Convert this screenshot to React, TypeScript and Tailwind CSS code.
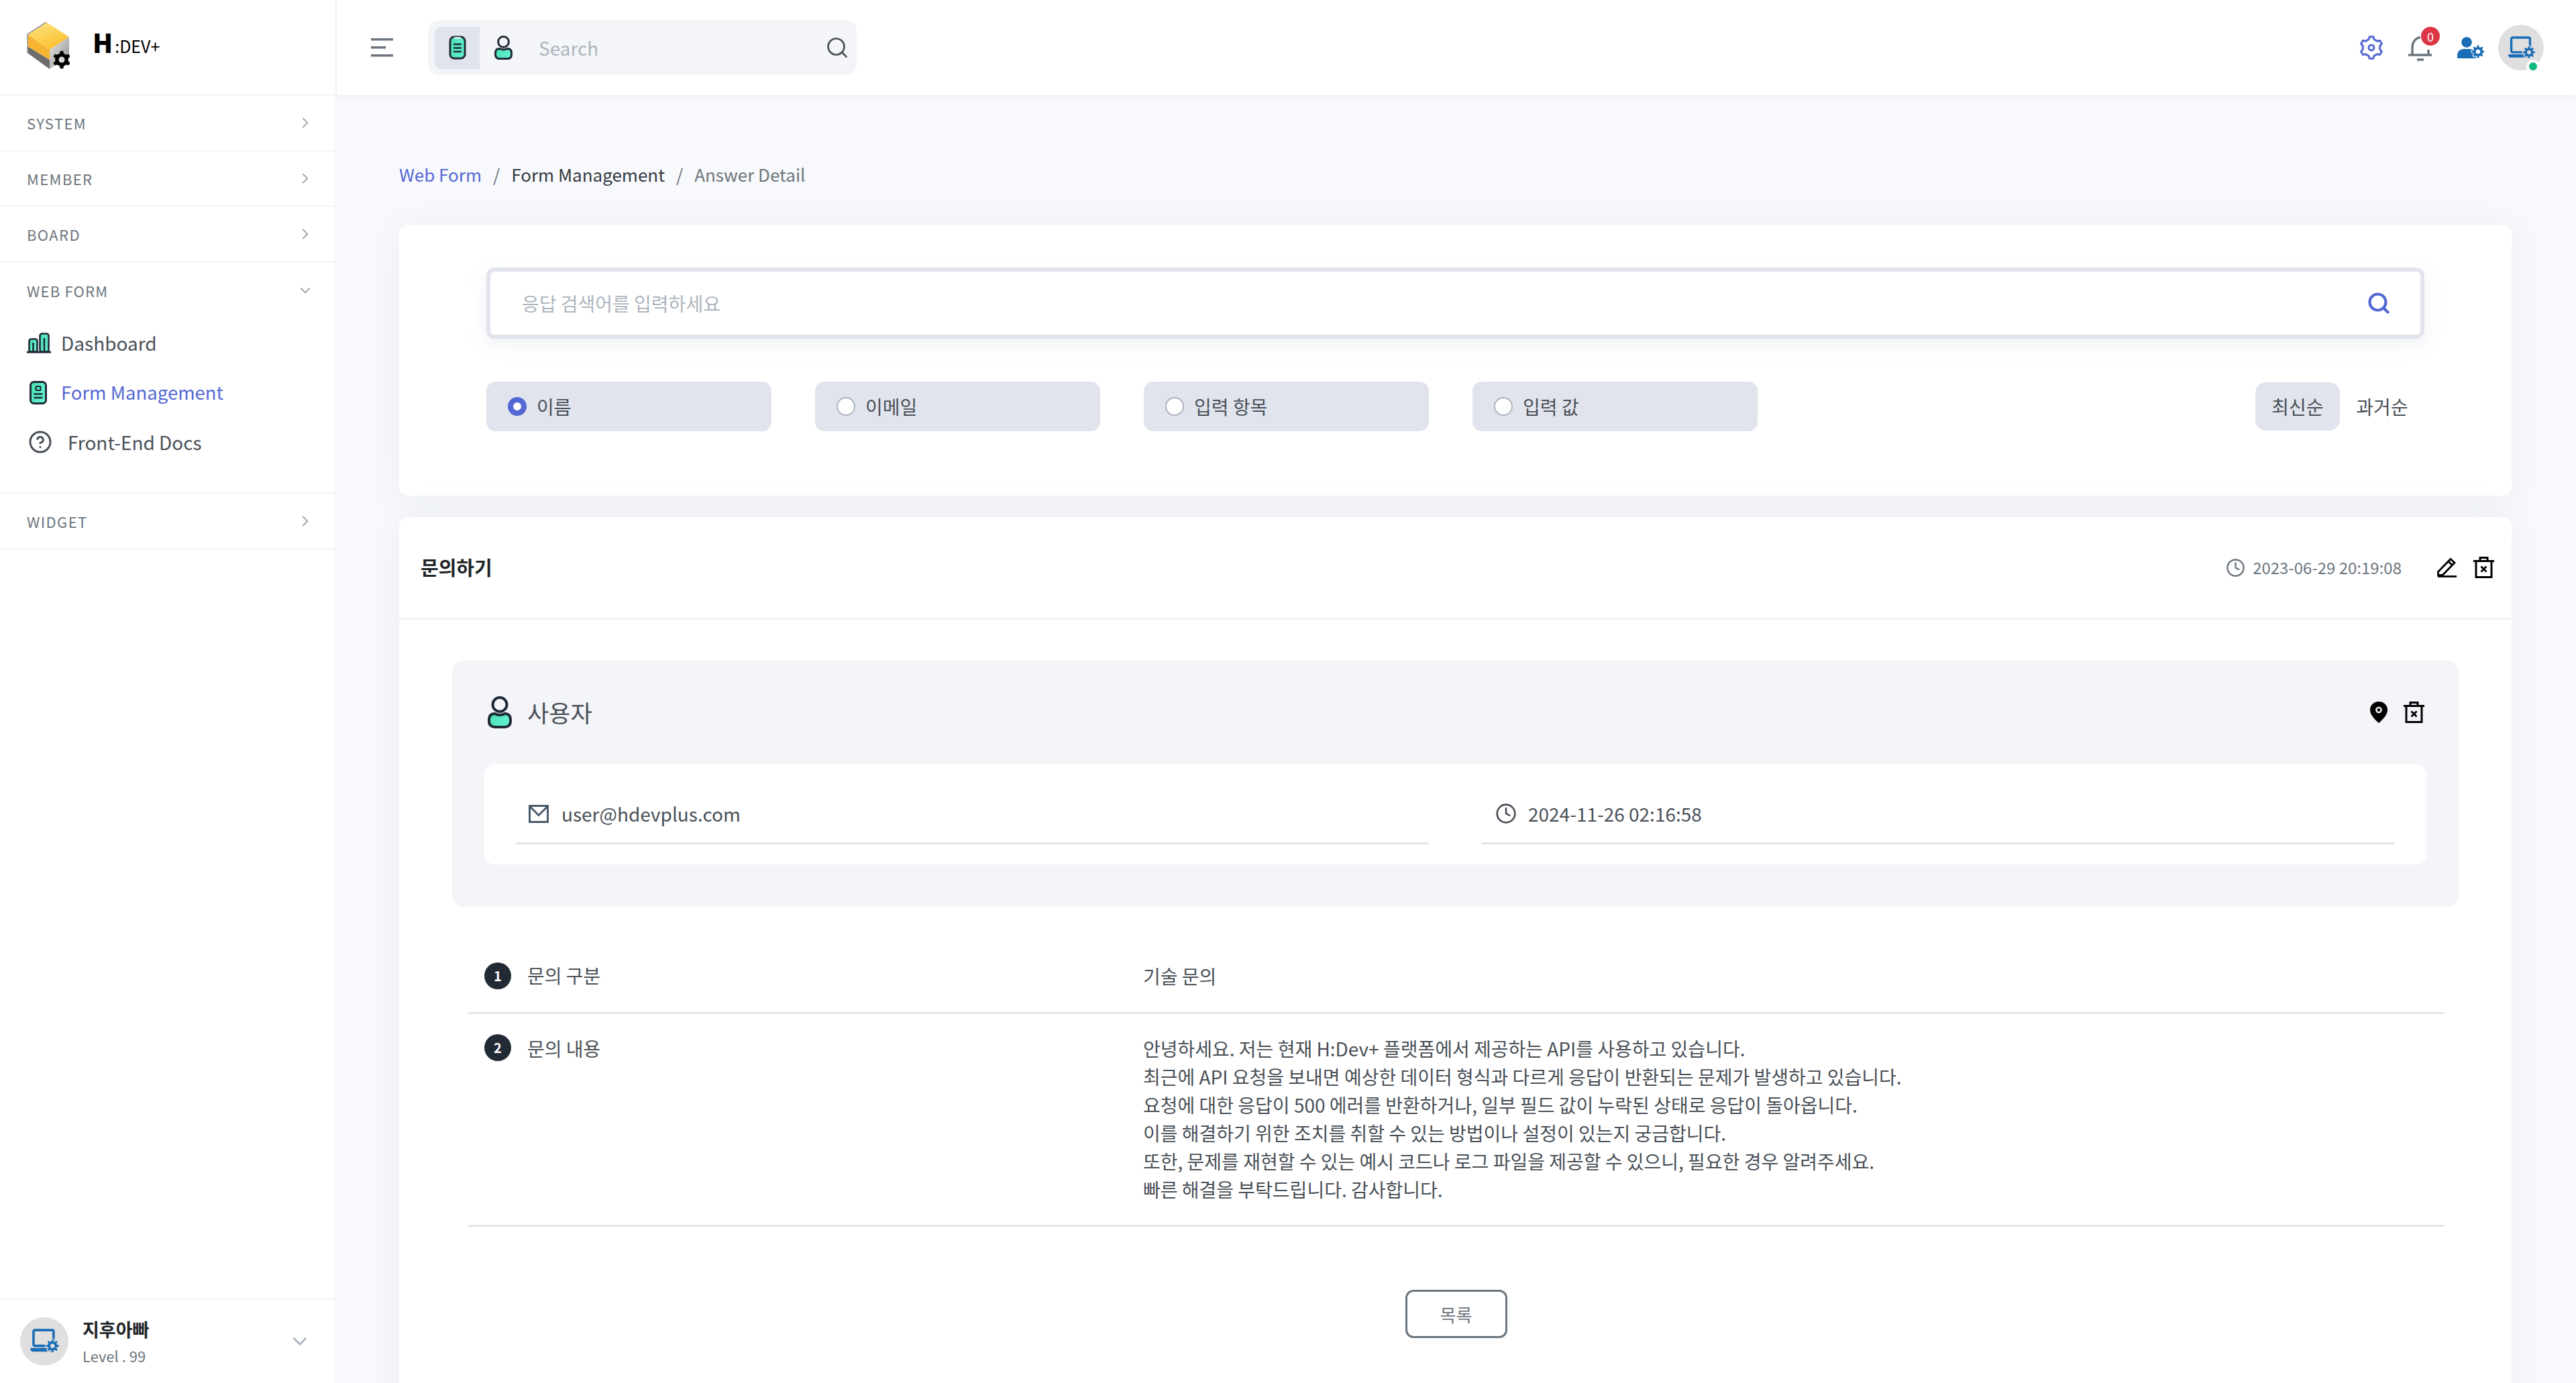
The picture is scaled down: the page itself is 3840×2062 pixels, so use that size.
import { ChevronDown, ChevronRight, CircleHelp, Clock, Search } from "lucide-react";

const gearPath = (cx: number, cy: number, inner: number, outer: number, teeth: number) => {
  const pts: string[] = [];
  const step = (Math.PI * 2) / teeth;
  for (let i = 0; i < teeth; i++) {
    const a = i * step - Math.PI / 2;
    const list: [number, number][] = [
      [a - step * 0.3, inner],
      [a - step * 0.16, outer],
      [a + step * 0.16, outer],
      [a + step * 0.3, inner],
    ];
    list.forEach(([t, r]) => pts.push(`${(cx + Math.cos(t) * r).toFixed(2)} ${(cy + Math.sin(t) * r).toFixed(2)}`));
  }
  return `M${pts.join("L")}Z`;
};

const Mint = ({ id }: { id: string }) => (
  <defs>
    <linearGradient id={id} x1="0" y1="0" x2="1" y2="0.4">
      <stop offset="0" stopColor="#46e0ae" />
      <stop offset="1" stopColor="#63f0d2" />
    </linearGradient>
  </defs>
);

const Logo = () => (
  <svg width="64" height="71" viewBox="0 0 64 71">
    <defs>
      <linearGradient id="logoTop" x1="0" y1="0" x2="0.6" y2="1">
        <stop offset="0" stopColor="#fde68a" />
        <stop offset="1" stopColor="#fbc02d" />
      </linearGradient>
      <linearGradient id="logoRight" x1="0" y1="0" x2="1" y2="1">
        <stop offset="0" stopColor="#e8e8e8" />
        <stop offset="1" stopColor="#8a8a8a" />
      </linearGradient>
    </defs>
    <polygon points="34,42 63,23 63,50 34,71" fill="url(#logoRight)" />
    <polygon points="1,37 34,57 34,71 1,47" fill="#6e6e6e" />
    <polygon points="1,19 34,42 34,57 1,37" fill="#f6b431" />
    <polygon points="1,19 29,1 63,23 34,42" fill="url(#logoTop)" />
    <polyline points="1,46 1,19 29,1" fill="none" stroke="#9a9a9a" strokeWidth="1.5" />
    <path d={gearPath(52, 57, 10, 13.5, 6)} fill="#000" stroke="#fff" strokeWidth="1" paintOrder="stroke" />
    <circle cx="52" cy="57" r="4.5" fill="#d8d8d8" />
  </svg>
);

const ClipboardIcon = () => (
  <svg width="26" height="36" viewBox="0 0 26 36">
    <Mint id="mintClip" />
    <rect x="2" y="2" width="22" height="32" rx="6" fill="url(#mintClip)" stroke="#1f2a37" strokeWidth="3" />
    <path d="M9 3.500h8" stroke="#e8faf5" strokeWidth="2.500" strokeLinecap="round" />
    <path d="M7 13h12M7 18.500h12M7 24h12" stroke="#1f2a37" strokeWidth="2.600" />
  </svg>
);

const PersonIcon = ({ w, h, id }: { w: number; h: number; id: string }) => (
  <svg width={w} height={h} viewBox="0 0 36 48">
    <Mint id={id} />
    <circle cx="18" cy="12.500" r="10.500" fill="none" stroke="#1f2a37" strokeWidth="4" />
    <path
      d="M2 35c0-6 3.500-9 8.500-9 4 2.500 11 2.500 15 0 5 0 8.500 3 8.500 9v2.500c0 5.500-3.500 8.500-9 8.500H11c-5.500 0-9-3-9-8.500z"
      fill={`url(#${id})`}
      stroke="#1f2a37"
      strokeWidth="4"
    />
  </svg>
);

const BarsIcon = () => (
  <svg width="36" height="31" viewBox="0 0 36 31">
    <Mint id="mintBars" />
    <rect x="3.500" y="9.500" width="12" height="19" rx="3" fill="url(#mintBars)" stroke="#1f2a37" strokeWidth="2.600" />
    <rect x="19.500" y="1.500" width="13" height="27" rx="3" fill="url(#mintBars)" stroke="#1f2a37" strokeWidth="2.600" />
    <path d="M9.500 15v13M26 8v20" stroke="#1f2a37" strokeWidth="2.600" />
    <path d="M0 29h36" stroke="#1f2a37" strokeWidth="2.800" />
  </svg>
);

const FormIcon = () => (
  <svg width="26" height="35" viewBox="0 0 26 35">
    <Mint id="mintForm" />
    <rect x="1.500" y="1.500" width="23" height="32" rx="5" fill="url(#mintForm)" stroke="#1f2a37" strokeWidth="3" />
    <rect x="9.500" y="8" width="7" height="6" rx="1.500" fill="none" stroke="#1f2a37" strokeWidth="2.200" />
    <path d="M6.500 19.500h13M6.500 25h13" stroke="#1f2a37" strokeWidth="2.600" />
  </svg>
);

const MailIcon = () => (
  <svg width="30" height="27" viewBox="0 0 30 27" fill="none" stroke="#495a6b" strokeWidth="3">
    <rect x="1.500" y="1.500" width="27" height="24" />
    <path d="M2.500 3L15 15.500 27.500 3" />
  </svg>
);

const MenuIcon = () => (
  <svg width="33" height="28" viewBox="0 0 33 28" fill="#6c757d">
    <rect y="0" width="33" height="3.500" />
    <rect y="12" width="22" height="3.500" />
    <rect y="24" width="33" height="3.500" />
  </svg>
);

const SettingIcon = () => (
  <svg width="36" height="38" viewBox="0 0 36 38">
    <path
      d={gearPath(18, 19, 13, 16.500, 6)}
      fill="none"
      stroke="#5468d4"
      strokeWidth="3"
      strokeLinejoin="round"
    />
    <circle cx="18" cy="19" r="4" fill="none" stroke="#5468d4" strokeWidth="3" />
  </svg>
);

const BellIcon = () => (
  <svg width="36" height="38" viewBox="0 0 36 38" fill="none" stroke="#6c757d" strokeWidth="3.500">
    <path d="M6 28V17C6 9 11 2 18 2" />
    <path d="M30 28V20" />
    <path d="M0 28h35" />
    <path d="M13 35h10" />
  </svg>
);

const UserCogIcon = () => (
  <svg width="40" height="32" viewBox="0 0 40 32">
    <circle cx="14" cy="8" r="7.800" fill="#1a6db5" />
    <path d="M0 32v-4c0-7 5-10 10-10h8c5 0 9 3 10 8v6z" fill="#1a6db5" />
    <path d={gearPath(31, 22, 7, 9.500, 8)} fill="#1a6db5" stroke="#fff" strokeWidth="2" paintOrder="stroke" />
    <circle cx="31" cy="22" r="3.300" fill="#fff" />
  </svg>
);

const LaptopCogIcon = ({ size, bg }: { size: number; bg: string }) => (
  <svg width={size} height={size * 0.85} viewBox="0 0 41 35">
    <rect x="5.500" y="2" width="28" height="22" rx="2" fill="none" stroke="#1a6db5" strokeWidth="3.400" />
    <path d="M1 27h30v3c0 1-1 2-2 2H4c-2 0-3-2-3-5z" fill="#1a6db5" />
    <path d={gearPath(32, 24, 6.500, 9, 8)} fill="#1a6db5" stroke={bg} strokeWidth="2.400" paintOrder="stroke" />
    <circle cx="32" cy="24" r="3" fill={bg} />
  </svg>
);

const TrashXIcon = () => (
  <svg width="31" height="32" viewBox="0 0 31 32" fill="none" stroke="#000" strokeWidth="3">
    <path d="M0 6.500h31" />
    <path d="M10 6V1.500h11V6" />
    <path d="M4 6.500V30.500h23V6.500" />
    <path d="M11.500 14.500l8 8M19.500 14.500l-8 8" strokeWidth="2.800" />
  </svg>
);

const PencilIcon = () => (
  <svg width="29" height="30" viewBox="0 0 29 30" fill="none" stroke="#000" strokeWidth="2.800">
    <path d="M1.500 21.500L20 2.500l6 5.500L8 26.500H1.500z" />
    <path d="M16.500 6l6 5.500" />
    <path d="M1 28.500h28" />
  </svg>
);

const PinIcon = () => (
  <svg width="26" height="32" viewBox="0 0 26 32">
    <path d="M13 0C5.500 0 0 5.500 0 12.500 0 20 7 26.500 13 32c6-5.500 13-12 13-19.500C26 5.500 20.500 0 13 0z" fill="#000" />
    <circle cx="13" cy="12.500" r="4.800" fill="#f3f5f9" />
    <circle cx="13" cy="12.500" r="2.400" fill="#000" />
  </svg>
);

const groups = ["SYSTEM", "MEMBER", "BOARD"];

const GroupRow = ({ label }: { label: string }) => (
  <div className="flex h-[83px] items-center justify-between border-b-[3px] border-[#f6f7fb] pl-[40px] pr-[32px]">
    <span className="text-[22px] tracking-[1.4px] text-[#6c757d]">{label}</span>
    <ChevronRight size={26} strokeWidth={1.5} className="text-[#868e96]" />
  </div>
);

const Sidebar = () => (
  <aside className="flex h-full w-[502px] shrink-0 flex-col border-r-2 border-[#f3f4f9] bg-white">
    <div className="flex h-[143px] items-start border-b-[3px] border-[#f6f7fb] pl-[40px] pt-[32px]">
      <Logo />
      <div className="ml-[34px] mt-[6px] flex items-baseline text-black">
        <span className="text-[39px] leading-[48px] font-black">H</span>
        <span className="ml-[3px] text-[25px] leading-[48px]">:DEV+</span>
      </div>
    </div>
    {groups.map((g) => (
      <GroupRow key={g} label={g} />
    ))}
    <div className="border-b-[3px] border-[#f6f7fb] pb-[38px]">
      <div className="flex h-[82px] items-center justify-between pl-[40px] pr-[32px]">
        <span className="text-[22px] tracking-[1.2px] text-[#6c757d]">WEB FORM</span>
        <ChevronDown size={26} strokeWidth={1.5} className="text-[#868e96]" />
      </div>
      <div className="flex h-[74px] items-center pl-[40px] text-[28px] text-[#495057]">
        <div className="w-[51px]">
          <BarsIcon />
        </div>
        Dashboard
      </div>
      <div className="flex h-[74px] items-center pl-[44px] text-[27.5px] text-[#5468d4]">
        <div className="w-[47px]">
          <FormIcon />
        </div>
        Form Management
      </div>
      <div className="flex h-[74px] items-center pl-[42px] text-[28px] text-[#495057]">
        <div className="w-[59px]">
          <CircleHelp size={36} strokeWidth={2} className="text-[#495057]" />
        </div>
        Front-End Docs
      </div>
    </div>
    <GroupRow label="WIDGET" />
    <div className="flex-1" />
    <div className="flex h-[127px] items-center border-t-[3px] border-[#f6f7fb] pl-[30px] pr-[36px]">
      <div className="flex h-[72px] w-[72px] items-center justify-center rounded-full bg-[#dfdfdf]">
        <LaptopCogIcon size={44} bg="#dfdfdf" />
      </div>
      <div className="ml-[21px] flex-1">
        <div className="text-[27px] leading-[40px] font-bold text-[#212529]">지후아빠</div>
        <div className="mt-[2px] text-[22px] leading-[34px] text-[#6c757d]">Level . 99</div>
      </div>
      <ChevronDown size={34} strokeWidth={2} className="text-[#adb5bd]" />
    </div>
  </aside>
);

const Header = () => (
  <header className="flex h-[142px] shrink-0 items-center bg-white pl-[51px] pr-[48px] shadow-[0_2px_6px_rgba(180,190,210,0.16)]">
    <MenuIcon />
    <div className="ml-[52px] flex h-[82px] w-[639px] items-center rounded-[16px] bg-[#f3f5f9] pl-[10px] pr-[11px]">
      <div className="flex h-[63px] w-[67px] items-center justify-center rounded-l-[10px] bg-[#e1e4ec]">
        <ClipboardIcon />
      </div>
      <div className="ml-[22px]">
        <PersonIcon w={27} h={36} id="mintTop" />
      </div>
      <span className="ml-[39px] flex-1 text-[28px] text-[#adb5bd]">Search</span>
      <Search size={36} strokeWidth={1.8} className="text-[#495057]" />
    </div>
    <div className="ml-auto flex items-center">
      <SettingIcon />
      <div className="relative ml-[37px] mt-[4px]">
        <BellIcon />
        <span className="absolute left-[19px] top-[-14px] flex h-[28px] w-[28px] items-center justify-center rounded-full bg-[#dc3545] text-[18px] leading-none text-white">
          0
        </span>
      </div>
      <div className="ml-[37px]">
        <UserCogIcon />
      </div>
      <div className="relative ml-[21px] flex h-[68px] w-[68px] items-center justify-center rounded-full bg-[#dfdfdf]">
        <LaptopCogIcon size={41} bg="#dfdfdf" />
        <span className="absolute bottom-[-4px] right-[6px] h-[20px] w-[20px] rounded-full border-[4px] border-white bg-[#10b981]" />
      </div>
    </div>
  </header>
);

const filters = ["이름", "이메일", "입력 항목", "입력 값"];

const SearchCard = () => (
  <section className="rounded-[14px] bg-white px-[130px] pb-[96px] pt-[64px] shadow-[0_4px_50px_rgba(190,200,215,0.22)]">
    <div className="flex h-[106px] items-center justify-between rounded-[12px] border-[6px] border-[#e1e4ec] bg-white pl-[47px] pr-[44px] shadow-[0_8px_24px_rgba(190,200,215,0.25)]">
      <span className="text-[28px] text-[#adb5bd]">응답 검색어를 입력하세요</span>
      <Search size={36} strokeWidth={2.8} className="text-[#5468d4]" />
    </div>
    <div className="mt-[64px] flex items-center justify-between">
      <div className="flex gap-[65px]">
        {filters.map((f, i) => (
          <div key={f} className="flex h-[74px] w-[425px] items-center rounded-[14px] bg-[#e1e4ec] pl-[32px]">
            {i === 0 ? (
              <span className="h-[28px] w-[28px] rounded-full border-[8px] border-[#5468d4] bg-white" />
            ) : (
              <span className="h-[28px] w-[28px] rounded-full border-[2px] border-[#adb5bd] bg-white" />
            )}
            <span className="ml-[15px] text-[28px] text-[#495057]">{f}</span>
          </div>
        ))}
      </div>
      <div className="flex items-center text-[28px] text-[#495057]">
        <span className="flex h-[72px] w-[126px] items-center justify-center rounded-[16px] bg-[#e1e4ec]">최신순</span>
        <span className="flex h-[72px] w-[126px] items-center justify-center">과거순</span>
      </div>
    </div>
  </section>
);

const lines = [
  "안녕하세요. 저는 현재 H:Dev+ 플랫폼에서 제공하는 API를 사용하고 있습니다.",
  "최근에 API 요청을 보내면 예상한 데이터 형식과 다르게 응답이 반환되는 문제가 발생하고 있습니다.",
  "요청에 대한 응답이 500 에러를 반환하거나, 일부 필드 값이 누락된 상태로 응답이 돌아옵니다.",
  "이를 해결하기 위한 조치를 취할 수 있는 방법이나 설정이 있는지 궁금합니다.",
  "또한, 문제를 재현할 수 있는 예시 코드나 로그 파일을 제공할 수 있으니, 필요한 경우 알려주세요.",
  "빠른 해결을 부탁드립니다. 감사합니다.",
];

const Badge = ({ n }: { n: number }) => (
  <span className="flex h-[40px] w-[40px] shrink-0 items-center justify-center rounded-full bg-[#212a35] text-[20px] font-bold text-white">
    {n}
  </span>
);

const AnswerCard = () => (
  <section className="mt-[32px] rounded-t-[14px] bg-white pb-[120px] shadow-[0_4px_50px_rgba(190,200,215,0.22)]">
    <div className="flex h-[153px] items-center justify-between border-b-[3px] border-[#f1f2f5] pl-[32px] pr-[26px]">
      <h2 className="text-[29px] font-bold text-[#212529]">문의하기</h2>
      <div className="flex items-center">
        <Clock size={29} strokeWidth={2} className="text-[#6c757d]" />
        <span className="ml-[11px] text-[24px] text-[#6c757d]">2023-06-29 20:19:08</span>
        <div className="ml-[53px]">
          <PencilIcon />
        </div>
        <div className="ml-[25px]">
          <TrashXIcon />
        </div>
      </div>
    </div>

    <div className="mx-[79px] mt-[61px] rounded-[16px] bg-[#f3f5f9] pb-[63px]">
      <div className="flex h-[154px] items-center justify-between pl-[53px] pr-[51px]">
        <div className="flex items-center">
          <PersonIcon w={36} h={48} id="mintUser" />
          <span className="ml-[23px] text-[35px] text-[#495057]">사용자</span>
        </div>
        <div className="flex items-center">
          <PinIcon />
          <div className="ml-[24px]">
            <TrashXIcon />
          </div>
        </div>
      </div>
      <div className="mx-[48px] grid grid-cols-2 gap-[79px] rounded-[16px] bg-white px-[47px] pb-[30px] pt-[52px]">
        <div className="flex items-center border-b-[3px] border-[#e3e5e8] pb-[21px] pl-[19px]">
          <MailIcon />
          <span className="ml-[19px] text-[28px] leading-[44px] text-[#495057]">user@hdevplus.com</span>
        </div>
        <div className="flex items-center border-b-[3px] border-[#e3e5e8] pb-[21px] pl-[20px]">
          <Clock size={32} strokeWidth={2} className="text-[#495057]" />
          <span className="ml-[17px] text-[28px] leading-[44px] text-[#495057]">2024-11-26 02:16:58</span>
        </div>
      </div>
    </div>

    <div className="ml-[103px] mr-[100px] mt-[52px] text-[28px] leading-[42px] text-[#495057]">
      <div className="grid grid-cols-[1006px_1fr] border-b-[3px] border-[#e3e5e8] pb-[33px] pt-[30px]">
        <div className="flex items-center gap-[24px] pl-[24px]">
          <Badge n={1} />
          <span className="relative top-[-1px]">문의 구분</span>
        </div>
        <div>기술 문의</div>
      </div>
      <div className="grid grid-cols-[1006px_1fr] border-b-[3px] border-[#e3e5e8] pb-[32px] pt-[30px]">
        <div className="flex items-start gap-[24px] pl-[24px]">
          <Badge n={2} />
          <span>문의 내용</span>
        </div>
        <div>
          {lines.map((l) => (
            <div key={l}>{l}</div>
          ))}
        </div>
      </div>
    </div>

    <div className="mt-[94px] flex justify-center pl-[2px]">
      <button className="h-[72px] w-[152px] rounded-[12px] border-[3px] border-[#6c757d] text-[26px] text-[#6c757d]">목록</button>
    </div>
  </section>
);

export default function App() {
  return (
    <div className="flex h-[2062px] w-[3840px] overflow-hidden bg-[#f8f9fc] font-['Noto_Sans_CJK_KR','Noto_Sans',sans-serif]">
      <Sidebar />
      <div className="flex min-w-0 flex-1 flex-col">
        <Header />
        <main className="flex-1 overflow-hidden pl-[93px] pr-[96px]">
          <div className="flex h-[193px] items-start pt-[96px] text-[26px] leading-[44px]">
            <span className="text-[#5468d4]">Web Form</span>
            <span className="mx-[17px] text-[#6c757d]">/</span>
            <span className="text-[#343a40]">Form Management</span>
            <span className="mx-[17px] text-[#6c757d]">/</span>
            <span className="text-[#6c757d]">Answer Detail</span>
          </div>
          <SearchCard />
          <AnswerCard />
        </main>
      </div>
    </div>
  );
}
